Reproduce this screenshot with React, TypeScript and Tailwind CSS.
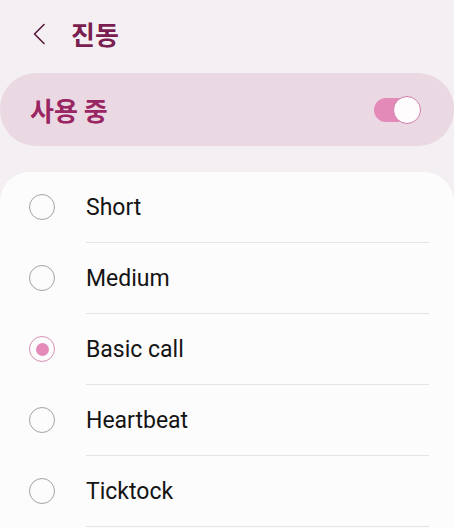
const OPTIONS = ["Short", "Medium", "Basic call", "Heartbeat", "Ticktock"];
const SELECTED = "Basic call";

const FONT = { fontFamily: "Roboto, 'Noto Sans CJK KR', sans-serif" };

function Radio({ checked }: { checked: boolean }) {
  if (checked) {
    return (
      <span className="flex h-[26px] w-[26px] items-center justify-center rounded-full border-[1.5px] border-[#d590b4]">
        <span className="h-[13px] w-[13px] rounded-full bg-[#e38ab8]" />
      </span>
    );
  }
  return <span className="h-[26px] w-[26px] rounded-full border-[1.5px] border-[#a3a3a3]" />;
}

export default function App() {
  return (
    <div className="flex h-[528px] w-[454px] flex-col overflow-hidden bg-[#f4eff2]" style={FONT}>
      {/* Header */}
      <div className="flex h-[73px] items-center pb-[6px]">
        <svg className="ml-[32px] h-[22px] w-[14px]" viewBox="0 0 14 22" fill="none">
          <path d="M12 1.5 L2.5 11 L12 20.5" stroke="#5a1a3c" strokeWidth="1.6" strokeLinecap="round" strokeLinejoin="round" />
        </svg>
        <h1
          className="ml-[25px] text-[26px] font-bold leading-none text-[#7a1d50]"
          style={{ fontFamily: "'Noto Sans CJK KR', sans-serif" }}
        >
          진동
        </h1>
      </div>

      {/* Master switch */}
      <div className="flex h-[73px] items-center justify-between rounded-[36px] bg-[#ead9e2] pl-[30px] pr-[33px]">
        <span
          className="text-[26px] font-bold leading-none text-[#9a2563]"
          style={{ fontFamily: "'Noto Sans CJK KR', sans-serif" }}
        >
          사용 중
        </span>
        <div className="relative h-[28px] w-[47px]">
          <div className="absolute left-0 top-[2px] h-[24px] w-[38px] rounded-full bg-[#e38ab8]" />
          <div className="absolute right-0 top-0 h-[28px] w-[28px] rounded-full border-[1.5px] border-[#d27fab] bg-[#fefcfd]" />
        </div>
      </div>

      {/* Options */}
      <div className="mt-[26px] flex-1 rounded-t-[30px] bg-[#fdfcfd]">
        {OPTIONS.map((opt) => (
          <div key={opt}>
            <div className="flex h-[70px] items-center">
              <div className="flex w-[86px] justify-center pr-[2px]">
                <Radio checked={opt === SELECTED} />
              </div>
              <span className="text-[23px] leading-none text-[#141414]">{opt}</span>
            </div>
            <div className="ml-[86px] mr-[25px] h-px bg-[#e6e3e5]" />
          </div>
        ))}
      </div>
    </div>
  );
}
